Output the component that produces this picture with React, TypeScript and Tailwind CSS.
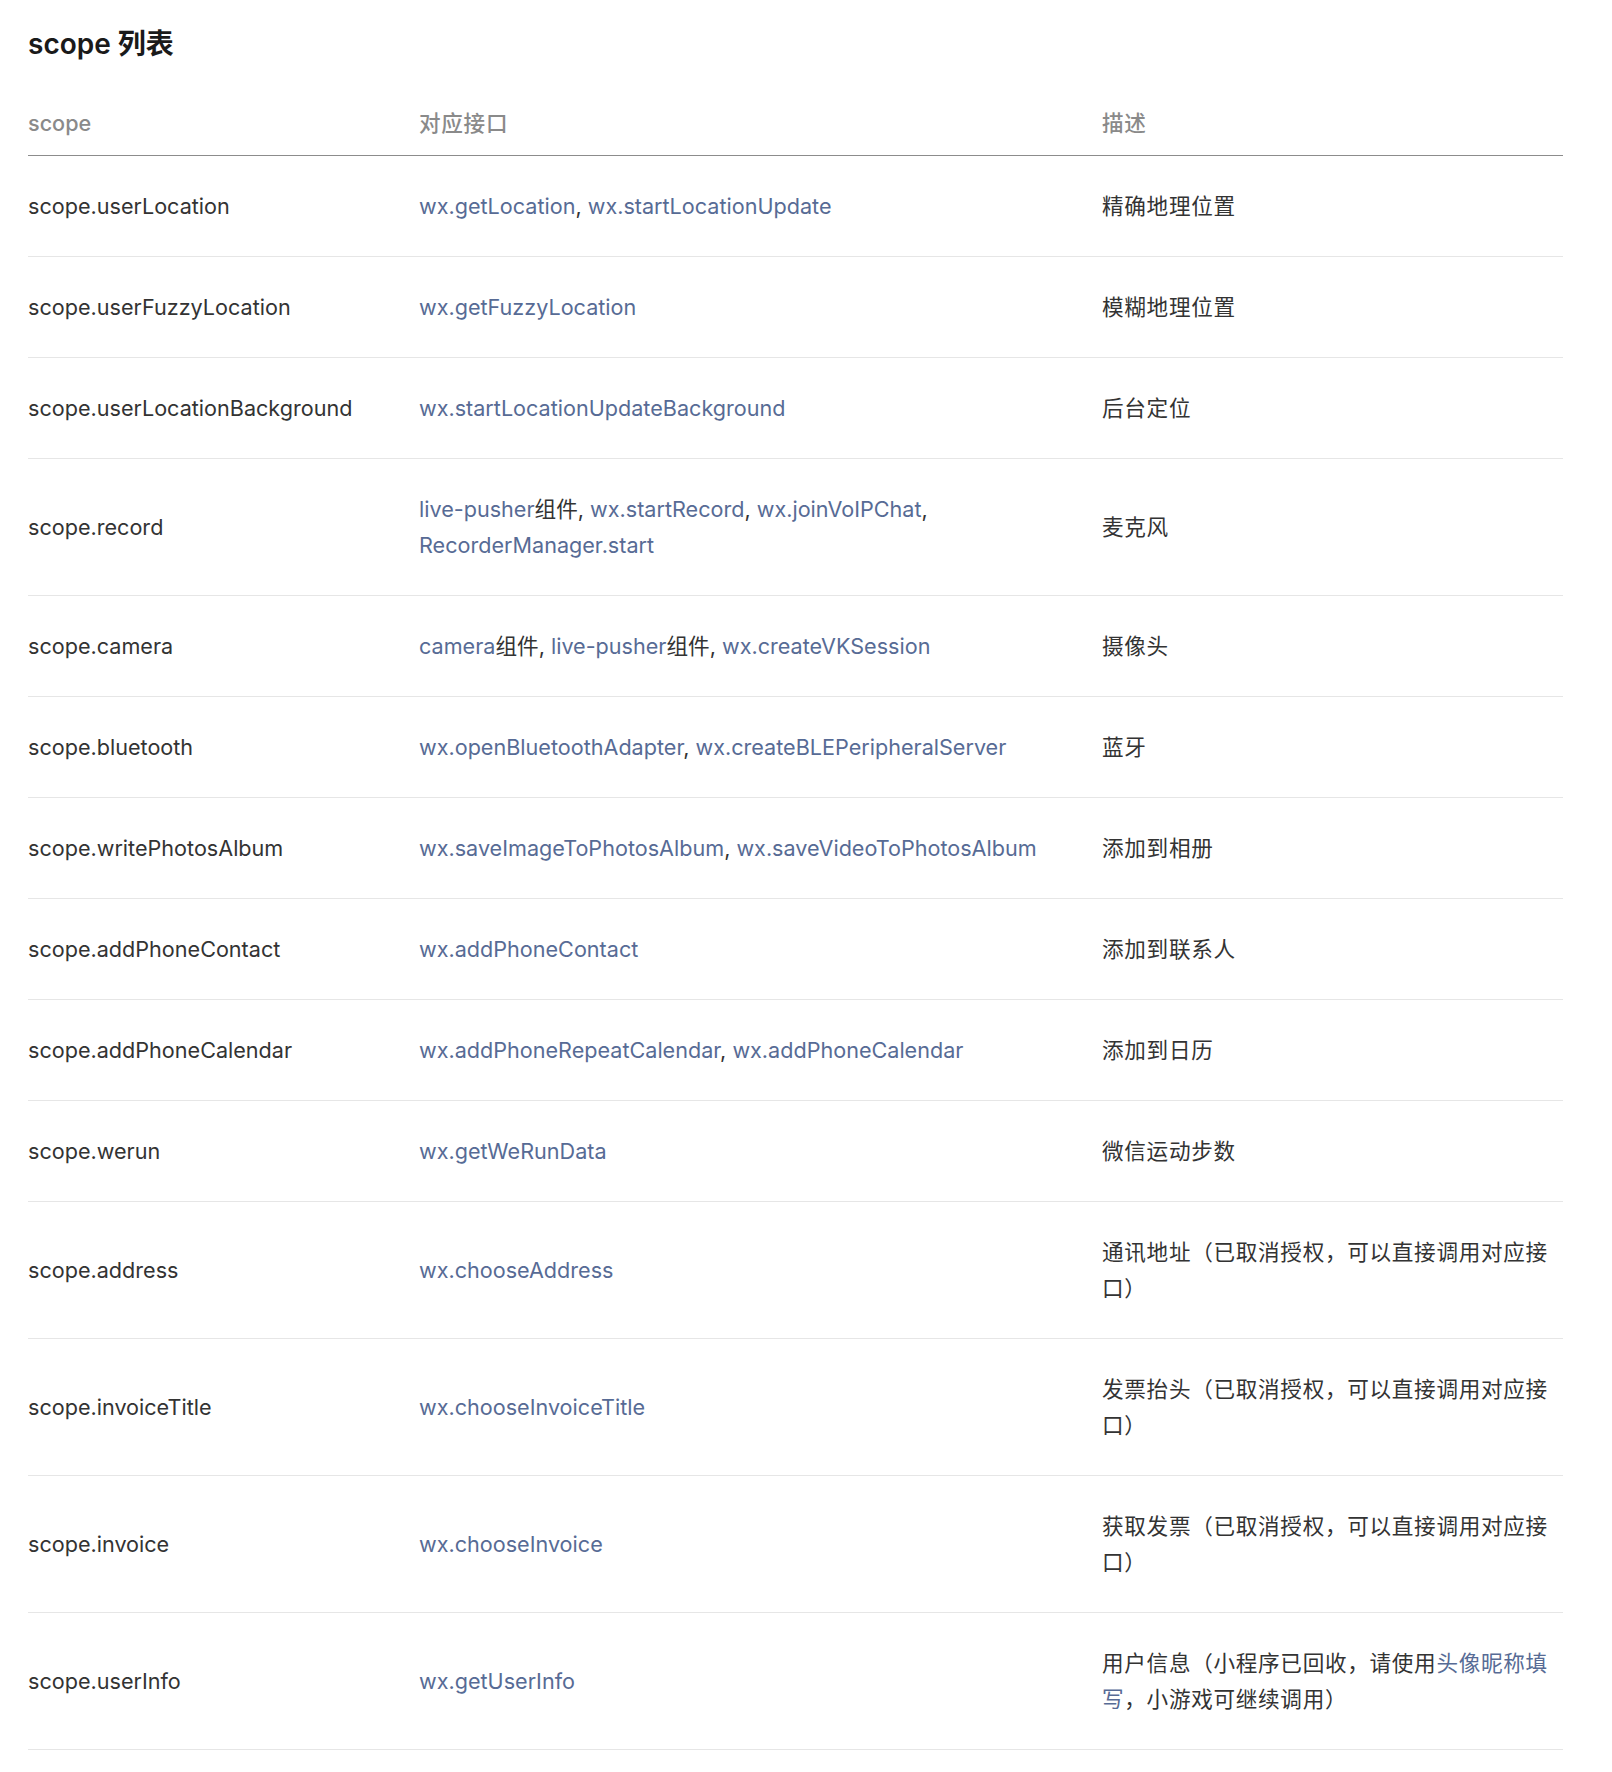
// Scope list page - doc table of mini program authorization scopes
import React from "react";

type Part = string | { link: string };

interface ScopeRow {
  scope: string;
  api: Part[][];
  desc: Part[];
}

const rows: ScopeRow[] = [
  { scope: "scope.userLocation", api: [[{ link: "wx.getLocation" }, ", ", { link: "wx.startLocationUpdate" }]], desc: ["精确地理位置"] },
  { scope: "scope.userFuzzyLocation", api: [[{ link: "wx.getFuzzyLocation" }]], desc: ["模糊地理位置"] },
  { scope: "scope.userLocationBackground", api: [[{ link: "wx.startLocationUpdateBackground" }]], desc: ["后台定位"] },
  {
    scope: "scope.record",
    api: [
      [{ link: "live-pusher" }, "组件, ", { link: "wx.startRecord" }, ", ", { link: "wx.joinVoIPChat" }, ","],
      [{ link: "RecorderManager.start" }],
    ],
    desc: ["麦克风"],
  },
  {
    scope: "scope.camera",
    api: [[{ link: "camera" }, "组件, ", { link: "live-pusher" }, "组件, ", { link: "wx.createVKSession" }]],
    desc: ["摄像头"],
  },
  {
    scope: "scope.bluetooth",
    api: [[{ link: "wx.openBluetoothAdapter" }, ", ", { link: "wx.createBLEPeripheralServer" }]],
    desc: ["蓝牙"],
  },
  {
    scope: "scope.writePhotosAlbum",
    api: [[{ link: "wx.saveImageToPhotosAlbum" }, ", ", { link: "wx.saveVideoToPhotosAlbum" }]],
    desc: ["添加到相册"],
  },
  { scope: "scope.addPhoneContact", api: [[{ link: "wx.addPhoneContact" }]], desc: ["添加到联系人"] },
  {
    scope: "scope.addPhoneCalendar",
    api: [[{ link: "wx.addPhoneRepeatCalendar" }, ", ", { link: "wx.addPhoneCalendar" }]],
    desc: ["添加到日历"],
  },
  { scope: "scope.werun", api: [[{ link: "wx.getWeRunData" }]], desc: ["微信运动步数"] },
  { scope: "scope.address", api: [[{ link: "wx.chooseAddress" }]], desc: ["通讯地址（已取消授权，可以直接调用对应接口）"] },
  { scope: "scope.invoiceTitle", api: [[{ link: "wx.chooseInvoiceTitle" }]], desc: ["发票抬头（已取消授权，可以直接调用对应接口）"] },
  { scope: "scope.invoice", api: [[{ link: "wx.chooseInvoice" }]], desc: ["获取发票（已取消授权，可以直接调用对应接口）"] },
  {
    scope: "scope.userInfo",
    api: [[{ link: "wx.getUserInfo" }]],
    desc: ["用户信息（小程序已回收，请使用", { link: "头像昵称填写" }, "，小游戏可继续调用）"],
  },
];

// renders a mix of plain text and link pieces
const Inline: React.FC<{ parts: Part[] }> = ({ parts }) => (
  <>
    {parts.map((p, i) =>
      typeof p === "string" ? (
        <span key={i}>{p}</span>
      ) : (
        <a key={i} href="#" className="text-[#576b95]">
          {p.link}
        </a>
      )
    )}
  </>
);

const App: React.FC = () => {
  return (
    <div className="min-h-screen bg-white pt-[24px] pb-[22px] pl-[28px] pr-[49px] font-['Inter','Noto_Sans_CJK_SC',sans-serif] text-[#333333]">
      <h2 className="text-[28px] leading-[40px] font-semibold text-[#1a1a1a]">scope 列表</h2>

      <table className="mt-[41px] w-full table-fixed text-[21.6px] leading-[36px]">
        <colgroup>
          <col className="w-[391px]" />
          <col className="w-[683px]" />
          <col />
        </colgroup>
        <thead>
          <tr className="text-left text-[#8a8a8a]">
            <th className="pb-[14px] pr-4 font-medium border-b border-[#8c8c8c]">scope</th>
            <th className="pb-[14px] pr-4 font-medium tracking-[0.7px] border-b border-[#8c8c8c]">对应接口</th>
            <th className="pb-[14px] pr-[10px] font-medium tracking-[0.7px] border-b border-[#8c8c8c]">描述</th>
          </tr>
        </thead>
        <tbody>
          {rows.map((row) => (
            <tr key={row.scope}>
              <td className="py-[32px] pr-4 align-middle border-b border-[#e6e6e6]">{row.scope}</td>
              <td className="py-[32px] pr-4 align-middle border-b border-[#e6e6e6]">
                {row.api.map((line, i) => (
                  <div key={i}>
                    <Inline parts={line} />
                  </div>
                ))}
              </td>
              <td className="py-[32px] pr-[10px] align-middle tracking-[0.7px] border-b border-[#e6e6e6]">
                <Inline parts={row.desc} />
              </td>
            </tr>
          ))}
        </tbody>
      </table>
    </div>
  );
};

export default App;
